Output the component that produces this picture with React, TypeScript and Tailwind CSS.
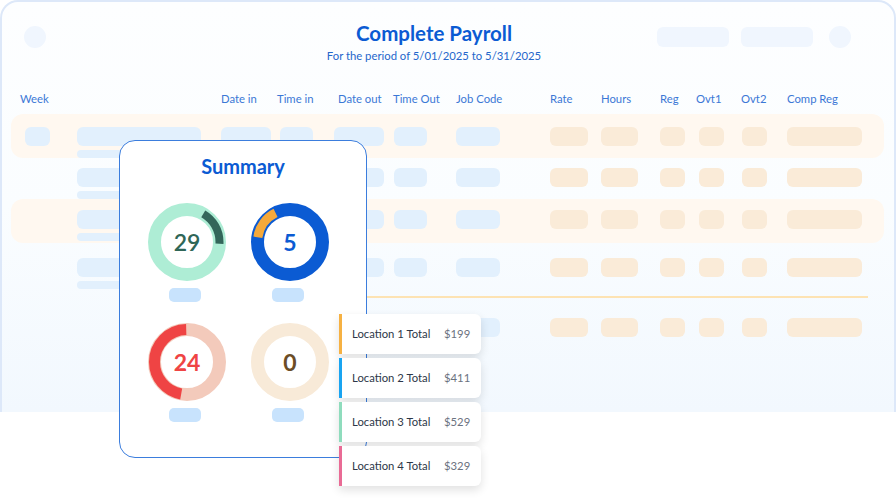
import React from 'react';

const FONT = { fontFamily: 'Lato, "Noto Sans", sans-serif' };

// column tracks start at x=20 inside the band
const COLS = 'grid grid-cols-[57px_144px_56px_57px_59px_63px_94px_51px_59px_36px_45px_46px_83px]';

const HEADERS = [
  { label: 'Week', cls: '' },
  { label: '', cls: '' },
  { label: 'Date in', cls: '' },
  { label: 'Time in', cls: '' },
  { label: 'Date out', cls: 'ml-1' },
  { label: 'Time Out', cls: '' },
  { label: 'Job Code', cls: '' },
  { label: 'Rate', cls: '' },
  { label: 'Hours', cls: '' },
  { label: 'Reg', cls: '' },
  { label: 'Ovt1', cls: '' },
  { label: 'Ovt2', cls: '' },
  { label: 'Comp Reg', cls: '' },
];

const BLUE = 'bg-[#e2f0fd]';
const ORANGE = 'bg-[#faebd8]';

function Pill({ cls }: { cls: string }) {
  return <div className={`h-[19px] rounded-[6px] ${cls}`} />;
}

function Row({ band, week, pad, h }: { band?: boolean; week?: boolean; pad: string; h: string }) {
  return (
    <div className={`${h} ${pad} rounded-[12px] pl-[9px] ${band ? 'bg-[#fff8f0]' : ''}`}>
      <div className={COLS}>
        <div>{week && <Pill cls={`ml-[5px] w-[25px] ${BLUE}`} />}</div>
        <div className="flex flex-col gap-[4px]">
          <Pill cls={`w-[124px] ${BLUE}`} />
          <div className={`h-[8px] w-[100px] rounded-full ${BLUE}`} />
        </div>
        <Pill cls={`w-[50px] ${BLUE}`} />
        <Pill cls={`ml-[3px] w-[33px] ${BLUE}`} />
        <Pill cls={`w-[50px] ${BLUE}`} />
        <Pill cls={`ml-[1px] w-[33px] ${BLUE}`} />
        <Pill cls={`w-[44px] ${BLUE}`} />
        <Pill cls={`w-[38px] ${ORANGE}`} />
        <Pill cls={`w-[37px] ${ORANGE}`} />
        <Pill cls={`w-[25px] ${ORANGE}`} />
        <Pill cls={`ml-[3px] w-[25px] ${ORANGE}`} />
        <Pill cls={`ml-[1px] w-[25px] ${ORANGE}`} />
        <Pill cls={`w-[75px] ${ORANGE}`} />
      </div>
    </div>
  );
}

function Donut({
  ring,
  arc,
  from,
  to,
  width,
  value,
  valueCls,
}: {
  ring: string;
  arc?: string;
  from?: number;
  to?: number;
  width?: number;
  value: string;
  valueCls: string;
}) {
  const r = 32.5;
  const c = 2 * Math.PI * r;
  const len = arc ? ((to! - from!) / 360) * c : 0;
  const off = arc ? -(from! / 360) * c : 0;
  return (
    <div className="relative h-[78px] w-[78px]">
      <svg width="78" height="78" viewBox="0 0 78 78" className="block">
        <circle cx="39" cy="39" r={r} fill="none" stroke={ring} strokeWidth="13" />
        {arc && (
          <circle
            cx="39"
            cy="39"
            r={r}
            fill="none"
            stroke={arc}
            strokeWidth={width}
            strokeDasharray={`${len} ${c}`}
            strokeDashoffset={off}
            transform="rotate(-90 39 39)"
          />
        )}
      </svg>
      <div className={`absolute inset-0 flex items-center justify-center text-[23px] font-bold ${valueCls}`}>
        {value}
      </div>
    </div>
  );
}

function Cell({ children }: { children: React.ReactNode }) {
  return (
    <div className="flex flex-col items-center gap-[7px]">
      {children}
      <div className="-ml-[4px] h-[14px] w-[32px] rounded-[5px] bg-[#c8e3fd]" />
    </div>
  );
}

const LOCATIONS = [
  { name: 'Location 1 Total', amount: '$199', bar: 'border-[#f6b143]' },
  { name: 'Location 2 Total', amount: '$411', bar: 'border-[#19a4f1]' },
  { name: 'Location 3 Total', amount: '$529', bar: 'border-[#8fdcbd]' },
  { name: 'Location 4 Total', amount: '$329', bar: 'border-[#e96b95]' },
];

export default function App() {
  return (
    <div className="relative h-[501px] w-[896px] overflow-hidden bg-white" style={FONT}>
      {/* Payroll card */}
      <div className="h-[412px] w-full rounded-t-[18px] border-x-2 border-t-2 border-[#dde8f9] bg-linear-to-b from-[#fdfeff] via-[#fafdff] to-[#f2f8fe] pt-[19px]">
        <div className="grid grid-cols-[1fr_auto_1fr] items-start">
          <div className="pl-[22px]">
            <div className="mt-[5px] h-[22px] w-[22px] rounded-full bg-[#f0f6fe]" />
          </div>
          <div className="mr-[28px] text-center">
            <div className="text-[20.5px] font-bold leading-[24px] text-[#0b5bd3]">Complete Payroll</div>
            <div className="mt-[3px] text-[11.3px] leading-[16px] text-[#2566cb]">
              For the period of 5/01/2025 to 5/31/2025
            </div>
          </div>
          <div className="flex justify-end gap-[12px] pr-[43px]">
            <div className="mt-[6px] h-[20px] w-[72px] rounded-[6px] bg-[#f0f6fe]" />
            <div className="mt-[6px] h-[20px] w-[72px] rounded-[6px] bg-[#f0f6fe]" />
            <div className="ml-[4px] mt-[5px] h-[22px] w-[22px] rounded-full bg-[#f0f6fe]" />
          </div>
        </div>

        <div className="ml-[9px] mr-[10px]">
          <div className={`${COLS} mt-[27px] pl-[9px] text-[11.3px] leading-[16px] text-[#3b78d6]`}>
            {HEADERS.map((h, i) => (
              <div key={i} className={h.cls}>
                {h.label}
              </div>
            ))}
          </div>

          <div className="mt-[7px]">
            <Row band week h="h-[44px]" pad="pt-[13px]" />
            <Row h="h-[41px]" pad="pt-[10px]" />
            <Row band h="h-[44px]" pad="pt-[11px]" />
            <Row h="h-[53px]" pad="pt-[15px]" />
            <div className="ml-[180px] mr-[16px] h-[2px] bg-[#fde3b3]" />
            <div className="pl-[9px] pt-[20px]">
              <div className={COLS}>
                <div />
                <div />
                <div />
                <div />
                <div />
                <div />
                <Pill cls={`w-[44px] ${BLUE}`} />
                <Pill cls={`w-[38px] ${ORANGE}`} />
                <Pill cls={`w-[37px] ${ORANGE}`} />
                <Pill cls={`w-[25px] ${ORANGE}`} />
                <Pill cls={`ml-[3px] w-[25px] ${ORANGE}`} />
                <Pill cls={`ml-[1px] w-[25px] ${ORANGE}`} />
                <Pill cls={`w-[75px] ${ORANGE}`} />
              </div>
            </div>
          </div>
        </div>
      </div>

      {/* Summary card */}
      <div className="absolute left-[119px] top-[140px] h-[318px] w-[248px] rounded-[16px] border border-[#3b7ddd] bg-white">
        <div className="mt-[13px] text-center text-[20px] font-bold leading-[24px] text-[#0b5bd3]">Summary</div>
        <div className="mt-[25px] grid grid-cols-[78px_78px] gap-x-[25px] gap-y-[21px] pl-[28px]">
          <Cell>
            <Donut ring="#aeedd5" arc="#33665a" from={30} to={93} width={8} value="29" valueCls="text-[#2f6657] font-semibold" />
          </Cell>
          <Cell>
            <Donut ring="#0b5bd3" arc="#f5a93a" from={278} to={333} width={9} value="5" valueCls="text-[#0b5bd3]" />
          </Cell>
          <Cell>
            <Donut ring="#f3cabb" arc="#ef4444" from={190} to={358} width={11} value="24" valueCls="text-[#ef4444]" />
          </Cell>
          <Cell>
            <Donut ring="#f8ead8" value="0" valueCls="text-[#6b4d26]" />
          </Cell>
        </div>
      </div>

      {/* Location totals */}
      <div className="absolute left-[339px] top-[314px] flex w-[142px] flex-col gap-[4px]">
        {LOCATIONS.map((l) => (
          <div
            key={l.name}
            className={`flex h-[40px] items-center rounded-r-[6px] border-l-[3px] ${l.bar} bg-white pl-[10px] text-[11.3px] shadow-[0_4px_10px_rgba(0,0,0,0.12)]`}
          >
            <span className="w-[92px] text-[#2d3748]">{l.name}</span>
            <span className="text-[#6b7280]">{l.amount}</span>
          </div>
        ))}
      </div>
    </div>
  );
}
